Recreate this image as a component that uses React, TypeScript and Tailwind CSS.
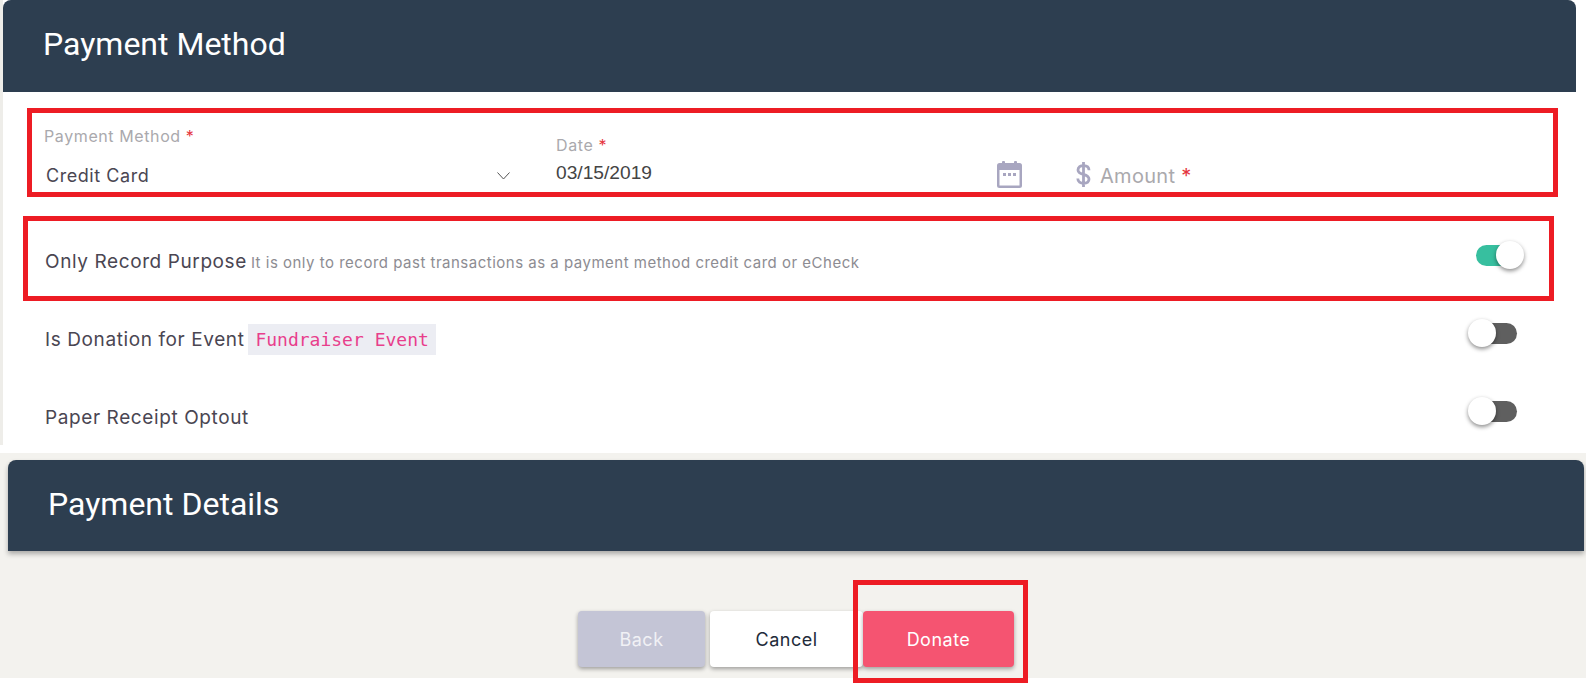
import React from "react";

function Toggle({ on }: { on?: boolean }) {
  return (
    <div className={on ? "relative mr-[-5px] h-[21px] w-[46px]" : "relative h-[21px] w-[46px]"}>
      <div className={on ? "h-full w-full rounded-full bg-[#37bf9f]" : "h-full w-full rounded-full bg-[#5f5f5f]"} />
      <div
        className={
          on
            ? "absolute top-[-4px] right-[-2px] h-[28px] w-[28px] rounded-full bg-white shadow-[0_2px_4px_rgba(0,0,0,0.45)]"
            : "absolute top-[-4px] left-[-3px] h-[28px] w-[28px] rounded-full bg-white shadow-[0_2px_4px_rgba(0,0,0,0.45)]"
        }
      />
    </div>
  );
}

function Star() {
  return <span className="text-[#e5343d]"> *</span>;
}

function Calendar() {
  return (
    <svg width="25" height="27" viewBox="0 0 25 27" className="block">
      <rect x="5" y="0" width="3" height="5" rx="1" fill="#a8a6c0" />
      <rect x="17" y="0" width="3" height="5" rx="1" fill="#a8a6c0" />
      <rect x="0" y="2" width="25" height="25" rx="2.5" fill="#a8a6c0" />
      <rect x="2.5" y="9" width="20" height="15.5" fill="#fff" />
      <rect x="6" y="12" width="3" height="3" fill="#a8a6c0" />
      <rect x="11" y="12" width="3" height="3" fill="#a8a6c0" />
      <rect x="16" y="12" width="3" height="3" fill="#a8a6c0" />
    </svg>
  );
}

function Dollar() {
  return (
    <svg width="15" height="25" viewBox="0 0 15 25" className="block">
      <path
        d="M13 8.200C13 5 10.600 3.600 7.500 3.600S2 5.100 2 7.900c0 5.800 11 3.200 11 9.200 0 2.800-2.400 4.300-5.500 4.300S1.800 19.800 1.800 16.600M7.500 0v25"
        fill="none"
        stroke="#a8a6c0"
        strokeWidth="2.800"
      />
    </svg>
  );
}

export default function App() {
  return (
    <div className="relative h-[695px] w-full overflow-hidden bg-white font-['Inter',sans-serif] text-[#4a4652]">
      <section className="h-[445px] overflow-hidden border-l-[3px] border-[#eeede9] bg-white">
        <header className="mr-[10px] flex h-[92px] items-center rounded-t-lg bg-[#2d3e50] pb-[4px] pl-[40px]">
          <h1 className="font-['Roboto',sans-serif] text-[32px] font-normal text-white">Payment Method</h1>
        </header>
        <div className="flex h-[124px] pl-[41px]">
          <div className="flex w-[512px] flex-col pt-[33px]">
            <div className="text-[16px] leading-[22px] tracking-[0.6px] text-[#aaa9ad]">
              Payment Method
              <Star />
            </div>
            <div className="mt-[17px] flex items-center justify-between pl-[2px] pr-[46px]">
              <span className="text-[18px] leading-[24px] tracking-[0.55px]">Credit Card</span>
              <svg width="13" height="8" viewBox="0 0 13 8" className="block">
                <path d="M.5.5l6 6.500 6-6.500" fill="none" stroke="#555" strokeWidth="1" />
              </svg>
            </div>
          </div>
          <div className="flex w-[466px] flex-col pt-[42px]">
            <div className="text-[16px] leading-[22px] tracking-[0.6px] text-[#aaa9ad]">
              Date
              <Star />
            </div>
            <div className="mt-[5px] flex items-start justify-between">
              <span className="font-['Liberation_Sans',sans-serif] text-[19.200px] leading-[24px] text-[#444]">
                03/15/2019
              </span>
              <div>
                <Calendar />
              </div>
            </div>
          </div>
          <div className="ml-[54px] flex items-start gap-[9px] pt-[70px]">
            <Dollar />
            <span className="pt-[1px] text-[20px] leading-[26px] tracking-[0.3px] text-[#aaa9ad]">
              Amount
              <Star />
            </span>
          </div>
        </div>
        {[
          {
            on: true,
            label: (
              <>
                Only Record Purpose{" "}
                <span className="ml-[-2px] text-[15px] tracking-[0.5px] text-[#8d8c92]">
                  It is only to record past transactions as a payment method credit card or eCheck
                </span>
              </>
            ),
          },
          {
            on: false,
            label: (
              <>
                Is Donation for Event{" "}
                <code className="ml-[-2px] bg-[#ecedf3] px-[7px] py-[5px] font-['DejaVu_Sans_Mono',monospace] text-[18px] tracking-normal text-[#e83e8c]">
                  Fundraiser Event
                </code>
              </>
            ),
          },
          { on: false, label: "Paper Receipt Optout" },
        ].map((r, i) => (
          <div key={i} className="flex h-[78px] items-center justify-between pl-[42px] pr-[69px]">
            <div className="pt-[14px] text-[19px] leading-[26px] tracking-[0.6px]">{r.label}</div>
            <Toggle on={r.on} />
          </div>
        ))}
      </section>
      <div className="h-[8px] bg-white" />
      <section className="h-[225px] bg-[#f3f2ee] pt-[7px]">
        <header className="ml-[8px] mr-[2px] flex h-[91px] items-center rounded-t-lg bg-[#2d3e50] pb-[4px] pl-[40px] shadow-[0_3px_5px_rgba(0,0,0,0.3)]">
          <h2 className="font-['Roboto',sans-serif] text-[32px] font-normal text-white">Payment Details</h2>
        </header>
        <div className="mt-[60px] flex h-[56px] pl-[578px] text-[18px] tracking-[0.5px]">
          <button className="mr-[5px] w-[127px] rounded bg-[#c4c5d6] text-[#f1f1f5] shadow-[0_2px_4px_rgba(0,0,0,0.35)]">
            Back
          </button>
          <button className="w-[153px] rounded bg-white text-[#222b3a] shadow-[0_2px_4px_rgba(0,0,0,0.35)]">
            Cancel
          </button>
          <button className="w-[151px] rounded bg-[#f55471] text-[#fff] shadow-[0_2px_4px_rgba(0,0,0,0.35)]">
            Donate
          </button>
        </div>
      </section>
      <div className="pointer-events-none absolute left-[27px] top-[108px] h-[89px] w-[1531px] border-[5px] border-[#ed1c24]" />
      <div className="pointer-events-none absolute left-[23px] top-[216px] h-[85px] w-[1531px] border-[5px] border-[#ed1c24]" />
      <div className="pointer-events-none absolute left-[853px] top-[580px] h-[103px] w-[175px] border-[5px] border-[#ed1c24]" />
    </div>
  );
}
